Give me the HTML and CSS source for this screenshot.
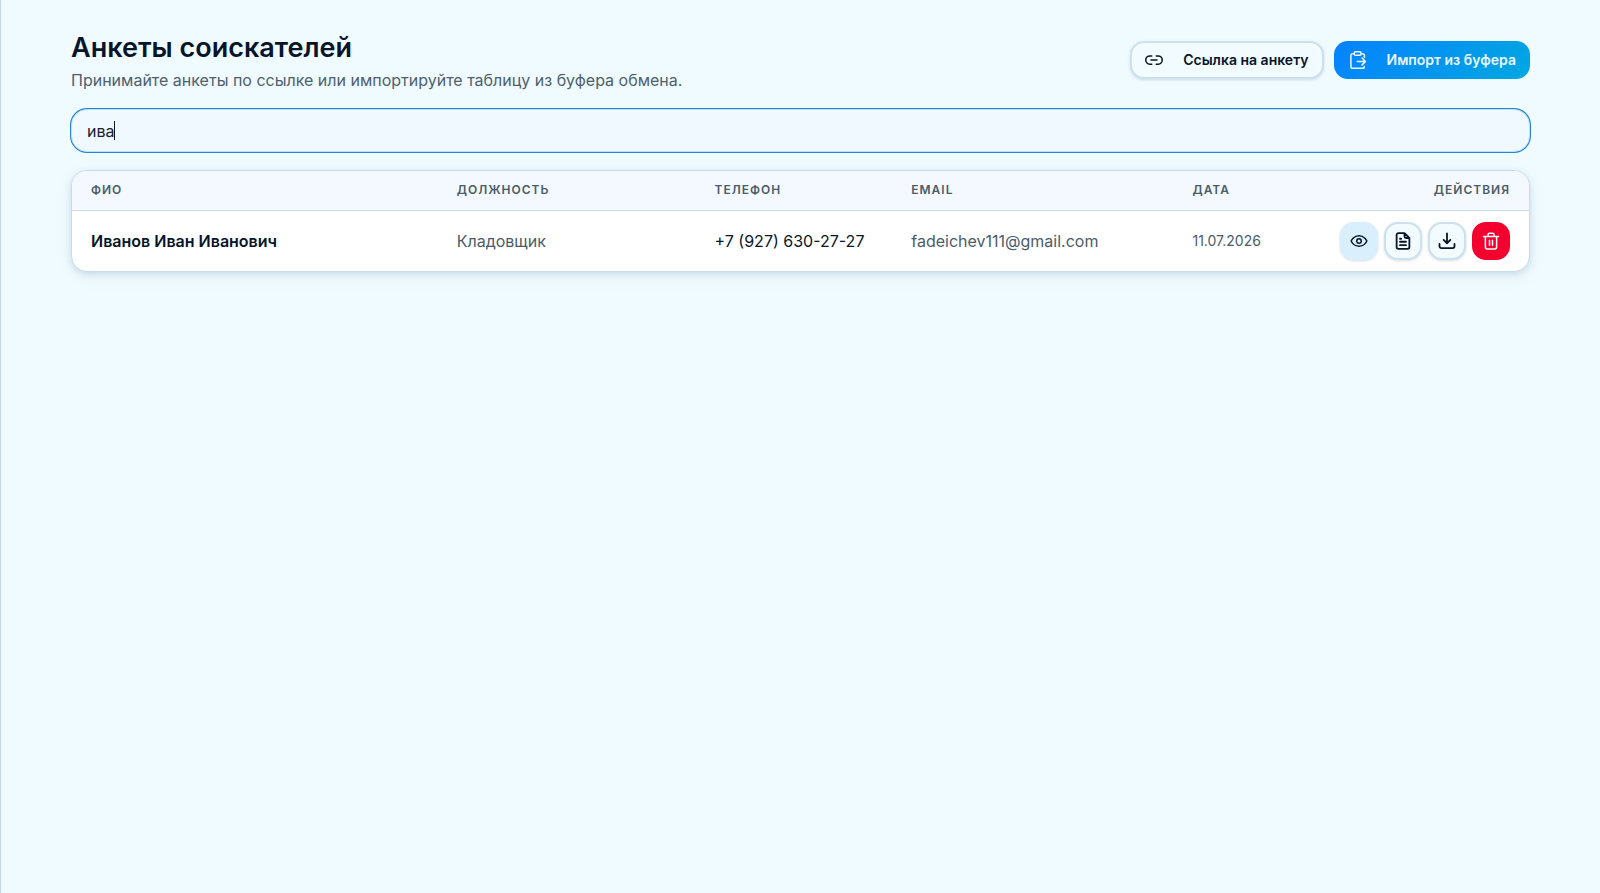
FILE: index.html
```html
<!DOCTYPE html>
<html lang="ru">
<head>
<meta charset="utf-8">
<meta name="viewport" content="width=device-width, initial-scale=1">
<title>Анкеты соискателей</title>
<link rel="stylesheet" href="styles.css">
</head>
<body>
<main class="page">
  <header class="page-header">
    <div>
      <h1 class="title">Анкеты соискателей</h1>
      <p class="subtitle">Принимайте анкеты по ссылке или импортируйте таблицу из буфера обмена.</p>
    </div>
    <div class="toolbar">
      <button class="btn btn-outline" type="button">
        <svg class="icon" viewBox="0 0 24 24" aria-hidden="true"><path d="M9 17.500H6.500a5.500 5.500 0 0 1 0-11H9M15 6.500h2.500a5.500 5.500 0 0 1 0 11H15M8 12h8"/></svg>
        Ссылка на анкету
      </button>
      <button class="btn btn-primary" type="button">
        <svg class="icon" viewBox="0 0 24 24" aria-hidden="true"><path d="M7 3.500H5a2.500 2.500 0 0 0-2.500 2.500v14.500A2.500 2.500 0 0 0 5 23h13a2.500 2.500 0 0 0 2.500-2.500M16 3.500h2A2.500 2.500 0 0 1 20.500 6v2.500M8.500 1h6A1.500 1.500 0 0 1 16 2.500v1.500a1.500 1.500 0 0 1-1.500 1.500h-6A1.500 1.500 0 0 1 7 4V2.500A1.500 1.500 0 0 1 8.500 1zM11 14h10.500M17.500 9.500l4.500 4.500-4.500 4.500"/></svg>
        Импорт из буфера
      </button>
    </div>
  </header>
  <div class="search-box">
    <input class="search" type="text" value="ива" aria-label="Поиск по анкетам" autofocus>
    <span class="caret" aria-hidden="true"></span>
  </div>
  <section class="card">
    <table class="table">
      <colgroup><col class="c-name"><col class="c-job"><col class="c-phone"><col class="c-email"><col class="c-date"><col></colgroup>
      <thead>
        <tr><th>ФИО</th><th>Должность</th><th>Телефон</th><th>Email</th><th>Дата</th><th class="right">Действия</th></tr>
      </thead>
      <tbody>
        <tr>
          <td class="name">Иванов Иван Иванович</td>
          <td>Кладовщик</td>
          <td class="phone">+7 (927) 630-27-27</td>
          <td>fadeichev111@gmail.com</td>
          <td class="date">11.07.2026</td>
          <td>
            <div class="actions">
              <button class="act act-view" type="button" aria-label="Просмотр"><svg class="icon" viewBox="0 0 24 24" aria-hidden="true"><path d="M1.500 12S5 5 12 5s10.500 7 10.500 7-3.500 7-10.500 7S1.500 12 1.500 12z"/><circle cx="12" cy="12" r="3"/></svg></button>
              <button class="act" type="button" aria-label="Документ"><svg class="icon icon-bold" viewBox="0 0 24 24" aria-hidden="true"><path d="M14 1.500H6a2.500 2.500 0 0 0-2.500 2.500v16A2.500 2.500 0 0 0 6 22.500h12a2.500 2.500 0 0 0 2.500-2.500V8zM14 1.500V6a2 2 0 0 0 2 2h4.500M8 9h1.500M8 13h8M8 17.500h8"/></svg></button>
              <button class="act" type="button" aria-label="Скачать"><svg class="icon icon-bold" viewBox="0 0 24 24" aria-hidden="true"><path d="M12 2v13M7.500 10.500L12 15l4.500-4.500M2 16v3a2.500 2.500 0 0 0 2.500 2.500h15A2.500 2.500 0 0 0 22 19v-3"/></svg></button>
              <button class="act act-delete" type="button" aria-label="Удалить"><svg class="icon" viewBox="0 0 24 24" aria-hidden="true"><path d="M2 6h20M4.500 6v14A2.500 2.500 0 0 0 7 22.500h10a2.500 2.500 0 0 0 2.500-2.500V6M8 6V3.500a2 2 0 0 1 2-2h4a2 2 0 0 1 2 2V6M10 11v6.500M14 11v6.500"/></svg></button>
            </div>
          </td>
        </tr>
      </tbody>
    </table>
  </section>
</main>
</body>
</html>
```
FILE: styles.css
```css
*, *::before, *::after { box-sizing: border-box; }

body {
  margin: 0;
  min-height: 100vh;
  border-left: 1px solid #c3d5e4;
  background: #f0fbff;
  color: #06152a;
  font-family: Inter, "Noto Sans", sans-serif;
  font-size: 16px;
}

.page {
  display: flex;
  flex-direction: column;
  gap: 18px;
  padding: 29px 70px;
}

.page-header {
  display: flex;
  align-items: center;
  justify-content: space-between;
  gap: 24px;
}

.title {
  margin: 0;
  font-size: 27px;
  line-height: 38px;
  font-weight: 600;
}

.subtitle {
  margin: 2px 0 0;
  color: #4d606e;
  font-size: 16px;
  line-height: 22px;
}

.toolbar { display: flex; gap: 10px; }

.icon {
  width: 18px;
  height: 18px;
  fill: none;
  stroke: currentColor;
  stroke-width: 2;
  stroke-linecap: round;
  stroke-linejoin: round;
}

.icon-bold { stroke-width: 2.4; }

.btn {
  display: flex;
  align-items: center;
  gap: 20px;
  height: 38px;
  padding: 0 13px;
  border: 2px solid transparent;
  border-radius: 14px;
  font: 600 14px/20px Inter, "Noto Sans", sans-serif;
}

.btn-outline {
  border-color: #cce0ee;
  background: #f2fbff;
  color: #06152a;
  box-shadow: 0 1px 3px #7891a84d;
}

.btn-primary {
  border: 0;
  padding: 0 14px 0 15px;
  background: linear-gradient(135deg, #0582ff, #00a8e0);
  color: #e9f8ff;
}

.search-box { position: relative; }

.search {
  display: block;
  width: 100%;
  height: 43px;
  padding: 0 15px;
  border: 1px solid #b5e4fd;
  border-radius: 16px;
  outline: 0;
  background: #f0f9ff;
  color: #17212f;
  caret-color: transparent;
  font: 400 16px/24px Inter, "Noto Sans", sans-serif;
  box-shadow: 0 0 0 1px #2a84d2;
}

.caret {
  position: absolute;
  top: 12px;
  left: 43px;
  width: 1px;
  height: 19px;
  background: #06152a;
}

.card {
  overflow: hidden;
  border: 1px solid #c8dcea;
  border-radius: 16px;
  background: #fff;
  box-shadow: 0 2px 6px #6488a433, 0 4px 16px #6488a41a;
}

.table {
  width: 100%;
  border-collapse: collapse;
  table-layout: fixed;
}

.c-name { width: 25.1%; }
.c-job { width: 17.7%; }
.c-phone { width: 13.5%; }
.c-email { width: 19.3%; }
.c-date { width: 9%; }

th {
  height: 39px;
  padding: 0 19px;
  border-bottom: 1px solid #c8dcea;
  background: #f3f9ff;
  color: #4a5c69;
  font-size: 12px;
  line-height: 20px;
  font-weight: 600;
  letter-spacing: 1px;
  text-align: left;
  text-transform: uppercase;
}

.right { text-align: right; }

td {
  height: 61px;
  padding: 0 19px;
  color: #4a5c69;
  white-space: nowrap;
}

.name { color: #06152a; font-weight: 600; }
.phone { color: #06152a; }
.date { font-size: 14px; }

.actions {
  display: flex;
  justify-content: flex-end;
  gap: 6px;
}

.act {
  display: grid;
  place-items: center;
  width: 38px;
  height: 38px;
  padding: 0;
  border: 2px solid #cce0ee;
  border-radius: 14px;
  background: #f2fbff;
  color: #06152a;
  box-shadow: 0 1px 3px #7891a84d;
}

.act-view {
  border-color: #d9effd;
  background: #d9effd;
}

.act-delete {
  border-color: #f4002f;
  background: #f4002f;
  color: #fff;
  box-shadow: none;
}
```
